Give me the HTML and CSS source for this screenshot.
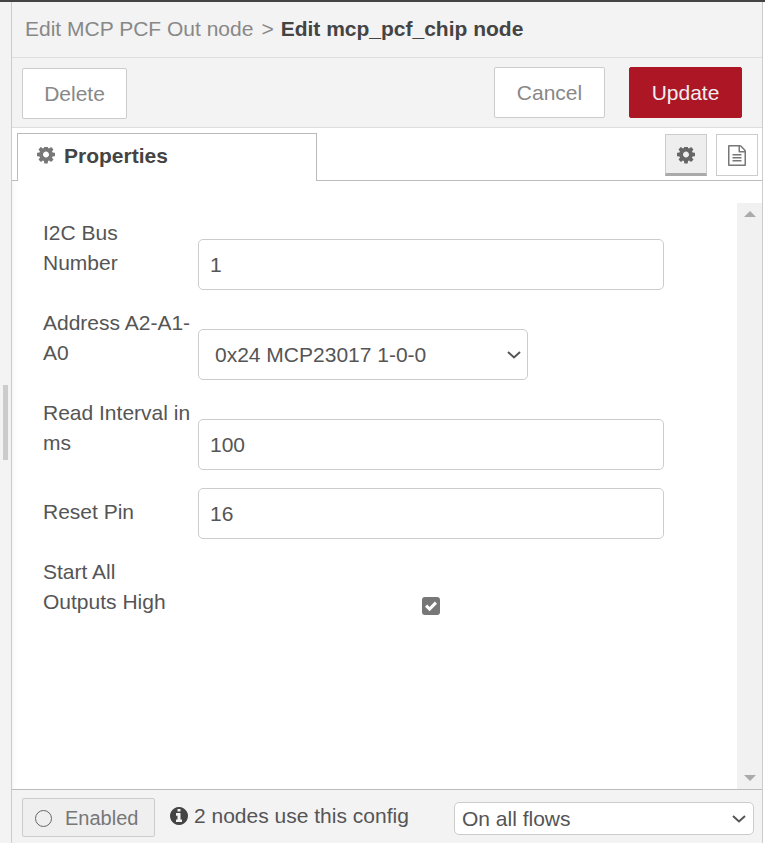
FILE: index.html
```html
<!DOCTYPE html>
<html lang="en">
<head>
    <meta charset="UTF-8">
    <meta name="viewport" content="width=device-width, initial-scale=1.0">
    <title>Edit mcp_pcf_chip node</title>
    <link rel="stylesheet" href="styles.css">
</head>
<body>
    <div class="grip"><div class="grip-handle"></div></div>

    <div class="tray">
        <div class="crumbs">
            <span class="crumb">Edit MCP PCF Out node</span>
            <span class="crumb-sep">&gt;</span>
            <span class="crumb-current">Edit mcp_pcf_chip node</span>
        </div>

        <div class="toolbar">
            <button class="btn btn-delete">Delete</button>
            <div class="toolbar-right">
                <button class="btn btn-cancel">Cancel</button>
                <button class="btn btn-primary">Update</button>
            </div>
        </div>

        <div class="tabs">
            <div class="tab">
                <svg class="tab-icon" viewBox="0 0 1536 1536"><path d="M1024 640q0-106-75-181t-181-75-181 75-75 181 75 181 181 75 181-75 75-181zm512-109v222q0 12-8 23t-20 13l-185 28q-19 54-39 91 35 50 107 138 10 12 10 25t-9 23q-27 37-99 108t-94 71q-12 0-26-9l-138-108q-44 23-91 38-16 136-29 186-7 28-36 28h-222q-14 0-24.5-8.5t-11.5-21.5l-28-184q-49-16-90-37l-141 107q-10 9-25 9-14 0-25-11-126-114-165-168-7-10-7-23 0-12 8-23 15-21 51-66.5t54-70.5q-27-50-41-99l-183-27q-13-2-21-12.5t-8-23.5v-222q0-12 8-23t19-13l186-28q14-46 39-92-40-57-107-138-10-12-10-24 0-10 9-23 26-36 98.5-107.5t94.5-71.5q13 0 26 10l138 107q44-23 91-38 16-136 29-186 7-28 36-28h222q14 0 24.5 8.5t11.5 21.5l28 184q49 16 90 37l142-107q9-9 24-9 13 0 25 10 129 119 165 170 7 8 7 22 0 12-8 23-15 21-51 66.5t-54 70.5q26 50 41 98l183 28q13 2 21 12.5t8 23.5z"/></svg>
                Properties
            </div>
            <div class="tab-buttons">
                <div class="tab-btn selected">
                    <svg class="tab-btn-icon" viewBox="0 0 1536 1536"><path d="M1024 640q0-106-75-181t-181-75-181 75-75 181 75 181 181 75 181-75 75-181zm512-109v222q0 12-8 23t-20 13l-185 28q-19 54-39 91 35 50 107 138 10 12 10 25t-9 23q-27 37-99 108t-94 71q-12 0-26-9l-138-108q-44 23-91 38-16 136-29 186-7 28-36 28h-222q-14 0-24.5-8.5t-11.5-21.5l-28-184q-49-16-90-37l-141 107q-10 9-25 9-14 0-25-11-126-114-165-168-7-10-7-23 0-12 8-23 15-21 51-66.5t54-70.5q-27-50-41-99l-183-27q-13-2-21-12.5t-8-23.5v-222q0-12 8-23t19-13l186-28q14-46 39-92-40-57-107-138-10-12-10-24 0-10 9-23 26-36 98.5-107.5t94.5-71.5q13 0 26 10l138 107q44-23 91-38 16-136 29-186 7-28 36-28h222q14 0 24.5 8.5t11.5 21.5l28 184q49 16 90 37l142-107q9-9 24-9 13 0 25 10 129 119 165 170 7 8 7 22 0 12-8 23-15 21-51 66.5t-54 70.5q26 50 41 98l183 28q13 2 21 12.5t8 23.5z"/></svg>
                </div>
                <div class="tab-btn">
                    <svg class="tab-btn-doc" viewBox="128 0 1536 1792"><path d="M1596 380q28 28 48 76t20 88v1152q0 40-28 68t-68 28h-1344q-40 0-68-28t-28-68v-1600q0-40 28-68t68-28h896q40 0 88 20t76 48zm-444-244v376h376q-10-29-22-41l-313-313q-12-12-41-22zm384 1528v-1024h-416q-40 0-68-28t-28-68v-416h-768v1536h1280zm-1024-864q0-14 9-23t23-9h704q14 0 23 9t9 23v64q0 14-9 23t-23 9h-704q-14 0-23-9t-9-23v-64zm736 224q14 0 23 9t9 23v64q0 14-9 23t-23 9h-704q-14 0-23-9t-9-23v-64q0-14 9-23t23-9h704zm0 256q14 0 23 9t9 23v64q0 14-9 23t-23 9h-704q-14 0-23-9t-9-23v-64q0-14 9-23t23-9h704z"/></svg>
                </div>
            </div>
        </div>

        <div class="body">
            <form class="form">
                <div class="form-row">
                    <label class="form-label">I2C Bus Number</label>
                    <input class="form-input" type="text" value="1">
                </div>
                <div class="form-row">
                    <label class="form-label">Address A2-A1-A0</label>
                    <select class="form-select">
                        <option>0x24 MCP23017 1-0-0</option>
                    </select>
                </div>
                <div class="form-row">
                    <label class="form-label">Read Interval in ms</label>
                    <input class="form-input" type="text" value="100">
                </div>
                <div class="form-row">
                    <label class="form-label">Reset Pin</label>
                    <input class="form-input" type="text" value="16">
                </div>
                <div class="form-row form-row-check">
                    <label class="form-label">Start All Outputs High</label>
                    <div class="check-wrap">
                        <div class="check">
                            <svg viewBox="0 0 18 18"><path d="M3 9.7l2.2-2.2 2.4 2.4 5.2-5.4 2.2 2.2-7.4 7.6z"/></svg>
                        </div>
                    </div>
                </div>
            </form>
            <div class="scrollbar">
                <div class="arrow-up"></div>
                <div class="arrow-down"></div>
            </div>
        </div>

        <div class="footer">
            <div class="toggle"><span class="toggle-dot"></span>Enabled</div>
            <div class="info">
                <svg class="info-icon" viewBox="0 0 1536 1536"><path d="M1024 1248v-160q0-14-9-23t-23-9h-96v-512q0-14-9-23t-23-9h-320q-14 0-23 9t-9 23v160q0 14 9 23t23 9h96v320h-96q-14 0-23 9t-9 23v160q0 14 9 23t23 9h448q14 0 23-9t9-23zm-128-896v-160q0-14-9-23t-23-9h-192q-14 0-23 9t-9 23v160q0 14 9 23t23 9h192q14 0 23-9t9-23zm640 416q0 209-103 385.5t-279.5 279.5-385.5 103-385.5-103-279.5-279.5-103-385.5 103-385.5 279.5-279.5 385.5-103 385.5 103 279.5 279.5 103 385.5z"/></svg>
                2 nodes use this config
            </div>
            <select class="scope-select">
                <option>On all flows</option>
            </select>
        </div>
    </div>
</body>
</html>
```

FILE: styles.css
```css
html, body {
    height: 100%;
}
body {
    margin: 0;
    display: flex;
    height: 843px;
    overflow: hidden;
    box-sizing: border-box;
    border-top: 2px solid #444;
    font-family: "Liberation Sans", Arial, sans-serif;
    font-size: 21px;
    color: #555;
    background: #fff;
}
.grip {
    width: 11px;
    flex-shrink: 0;
    background: #f3f3f3;
    display: flex;
    align-items: flex-start;
}
.grip-handle {
    width: 5px;
    height: 75px;
    margin: 383px 0 0 3px;
    background: #ccc;
}
.tray {
    width: 752px;
    flex-shrink: 0;
    display: flex;
    flex-direction: column;
    box-sizing: border-box;
    border-left: 1px solid #ccc;
    border-right: 1px solid #ccc;
}

/* header */
.crumbs {
    height: 56px;
    box-sizing: border-box;
    border-bottom: 1px solid #ddd;
    background: #f3f3f3;
    padding: 15px 0 0 13px;
    line-height: 24px;
    display: flex;
}
.crumb {
    color: #888;
}
.crumb-sep {
    color: #888;
    margin: 0 7px 0 8px;
}
.crumb-current {
    font-weight: bold;
    color: #444;
}
.toolbar {
    height: 70px;
    box-sizing: border-box;
    border-bottom: 1px solid #ddd;
    background: #f3f3f3;
    padding: 9px 20px 0 10px;
    display: flex;
    justify-content: space-between;
    align-items: flex-start;
}
.toolbar-right {
    display: flex;
    gap: 24px;
}
.btn {
    height: 51px;
    box-sizing: border-box;
    border: 1px solid #ccc;
    border-radius: 2px;
    background: #fff;
    color: #888;
    font: inherit;
    padding: 0;
}
.btn-delete {
    width: 105px;
    margin-top: 1px;
}
.btn-cancel {
    width: 111px;
}
.btn-primary {
    width: 113px;
    background: #ad1625;
    border-color: #ad1625;
    color: #eee;
}

/* tabs */
.tabs {
    height: 53px;
    box-sizing: border-box;
    border-bottom: 1px solid #bbb;
    padding: 5px 4px 0 5px;
    display: flex;
    justify-content: space-between;
    align-items: flex-start;
    flex-shrink: 0;
}
.tab {
    width: 300px;
    height: 48px;
    box-sizing: border-box;
    border: 1px solid #bbb;
    border-bottom: none;
    background: #fff;
    padding: 0 0 0 19px;
    display: flex;
    align-items: center;
    gap: 9px;
    font-weight: bold;
    color: #444;
    padding-bottom: 3px;
}
.tab-icon {
    width: 18px;
    height: 18px;
    fill: #777;
}
.tab-buttons {
    display: flex;
    gap: 9px;
    margin-top: 1px;
}
.tab-btn {
    width: 42px;
    height: 42px;
    box-sizing: border-box;
    border: 1px solid #ccc;
    display: flex;
    align-items: center;
    justify-content: center;
}
.tab-btn.selected {
    background: #eee;
    border-bottom: 3px solid #aaa;
    padding-top: 4px;
}
.tab-btn-icon {
    width: 18px;
    height: 18px;
    fill: #666;
}
.tab-btn-doc {
    width: 18px;
    height: 21px;
    fill: #777;
}

/* form */
.body {
    flex: 1;
    display: flex;
    min-height: 0;
    padding-top: 22px;
    box-sizing: border-box;
    box-shadow: inset 5px 0 5px -4px rgba(0, 0, 0, 0.05);
}
.form {
    flex: 1;
    margin: 0;
    padding: 15px 0 0 31px;
}
.form-row {
    display: flex;
    align-items: flex-end;
    margin-bottom: 18px;
}
.form-label {
    width: 150px;
    margin-right: 5px;
    margin-bottom: 12px;
    flex-shrink: 0;
    line-height: 30px;
    color: #555;
}
.form-input {
    width: 466px;
    height: 51px;
    box-sizing: border-box;
    border: 1px solid #ccc;
    border-radius: 5px;
    padding: 0 12px 0 11px;
    font: inherit;
    color: #555;
    background: #fff;
    outline: none;
}
.form-select {
    appearance: none;
    width: 330px;
    height: 51px;
    box-sizing: border-box;
    border: 1px solid #ccc;
    border-radius: 5px;
    padding: 0 12px 0 16px;
    font: inherit;
    color: #555;
    background: #fff url("data:image/svg+xml,%3Csvg xmlns='http://www.w3.org/2000/svg' width='14' height='8'%3E%3Cpath d='M1 1l6 5.5L13 1' fill='none' stroke='%23555' stroke-width='2'/%3E%3C/svg%3E") no-repeat right 6px center;
}
.form-row-check {
    align-items: flex-start;
}
.form-row-check .form-label {
    margin-bottom: 0;
}
.check-wrap {
    width: 466px;
    display: flex;
    justify-content: center;
    padding-top: 40px;
}
.check {
    width: 18px;
    height: 18px;
    border-radius: 3px;
    background: #777;
}
.check svg {
    display: block;
    fill: #fff;
}
.scrollbar {
    width: 25px;
    margin-top: 0;
    background: #f1f1f1;
    display: flex;
    flex-direction: column;
    justify-content: space-between;
    align-items: center;
    padding: 8px 0;
    box-sizing: border-box;
}
.arrow-up {
    width: 0;
    height: 0;
    border-left: 6px solid transparent;
    border-right: 6px solid transparent;
    border-bottom: 6px solid #aaa;
}
.arrow-down {
    width: 0;
    height: 0;
    border-left: 6px solid transparent;
    border-right: 6px solid transparent;
    border-top: 6px solid #aaa;
}

/* footer */
.footer {
    height: 54px;
    flex-shrink: 0;
    box-sizing: border-box;
    border-top: 1px solid #bbb;
    background: #f3f3f3;
    padding: 8px 8px 0 10px;
    display: flex;
    align-items: flex-start;
}
.toggle {
    width: 133px;
    height: 39px;
    box-sizing: border-box;
    border: 1px solid #ccc;
    border-radius: 2px;
    background: #efefef;
    color: #777;
    display: flex;
    align-items: center;
    padding-left: 12px;
    gap: 13px;
    font-size: 20px;
    padding-top: 1px;
}
.toggle-dot {
    width: 17px;
    height: 17px;
    box-sizing: border-box;
    border: 1px solid #666;
    border-radius: 50%;
}
.info {
    margin-left: 15px;
    display: flex;
    align-items: center;
    gap: 6px;
    line-height: 36px;
    color: #555;
}
.info-icon {
    width: 18px;
    height: 18px;
    fill: #444;
}
.scope-select {
    appearance: none;
    margin: 4px 0 0 auto;
    width: 300px;
    height: 33px;
    box-sizing: border-box;
    border: 1px solid #ccc;
    border-radius: 5px;
    padding: 0 3px 0 7px;
    font: inherit;
    color: #555;
    background: #fff url("data:image/svg+xml,%3Csvg xmlns='http://www.w3.org/2000/svg' width='14' height='8'%3E%3Cpath d='M1 1l6 5.5L13 1' fill='none' stroke='%23555' stroke-width='2'/%3E%3C/svg%3E") no-repeat right 7px center;
}
```
